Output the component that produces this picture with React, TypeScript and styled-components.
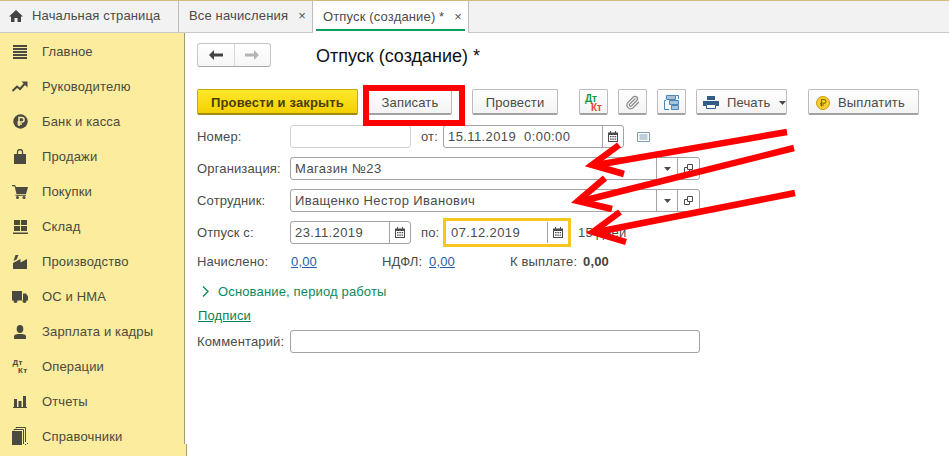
import { ReactNode } from 'react';
import styled, { createGlobalStyle } from 'styled-components';
import { Paperclip } from 'lucide-react';

const Global = createGlobalStyle`
    html, body { margin: 0; padding: 0; height: 100%; background: #fff; overflow: hidden; }
    body { font-family: "Liberation Sans", Arial, sans-serif; font-size: 13px; color: #4b4b4b; letter-spacing: 0.15px; }
    #root { height: 100%; }
`;

const Page = styled.div`
    position: relative;
    width: 949px;
    height: 456px;
    display: flex;
    flex-direction: column;
    overflow: hidden;
`;

const TabBar = styled.div`
    display: flex;
    height: 33px;
    flex: none;
    background: #f2f2f2;
    border-top: 1px solid #cdbd7d;
    border-bottom: 1px solid #c9c9c9;
    box-sizing: border-box;
`;

const Tab = styled.div<{ $active?: boolean; $width: number }>`
    position: relative;
    width: ${p => p.$width}px;
    box-sizing: border-box;
    display: flex;
    align-items: center;
    padding: 0 0 2px 10px;
    border-right: 1px solid #bdbdbd;
    background: ${p => (p.$active ? '#fff' : 'transparent')};
    color: #4b4b4b;
    white-space: nowrap;
    ${p => p.$active && `
        margin-bottom: -1px;
        &::after {
            content: '';
            position: absolute;
            left: 3px;
            right: 3px;
            bottom: 2px;
            height: 2px;
            background: #0f9d58;
        }
    `}
`;

const HomeTab = styled(Tab)`
    padding-left: 9px;
    gap: 9px;
`;

const Close = styled.span`
    margin-left: auto;
    margin-right: 6px;
    font-size: 13px;
    color: #555;
`;

const Body = styled.div`
    flex: 1;
    display: flex;
    min-height: 0;
`;

const Sidebar = styled.nav`
    position: relative;
    width: 185px;
    flex: none;
    box-sizing: border-box;
    background: #fbec9e;
    border-right: 1px solid #a39b6e;
    padding-top: 1px;
    &::after {
        content: '';
        position: absolute;
        right: -3px;
        bottom: 0;
        width: 2px;
        height: 12px;
        background: #fbec9e;
        border-right: 1px solid #a39b6e;
    }
`;

const NavItem = styled.div`
    height: 35px;
    display: flex;
    align-items: center;
    padding-left: 12px;
    gap: 14px;
    color: #4a4a40;
`;

const NavIcon = styled.span`
    width: 16px;
    height: 16px;
    display: flex;
    align-items: center;
    justify-content: center;
    flex: none;
`;

const Main = styled.main`
    flex: 1;
    padding: 10px 0 0 12px;
    min-width: 0;
`;

const Header = styled.div`
    display: flex;
    align-items: center;
    height: 24px;
`;

const NavGroup = styled.div`
    display: flex;
    width: 74px;
    height: 24px;
    box-sizing: border-box;
    background: linear-gradient(#fff, #f6f6f6);
    border: 1px solid #c4c4c4;
    border-bottom-color: #a9a9a9;
    border-radius: 3px;
`;

const NavButton = styled.div<{ $divided?: boolean }>`
    flex: 1;
    display: flex;
    align-items: center;
    justify-content: center;
    ${p => p.$divided && 'border-right: 1px solid #d8d8d8;'}
`;

const Title = styled.h1`
    margin: 2px 0 0 45px;
    font-size: 18px;
    font-weight: 400;
    color: #111;
    letter-spacing: 0;
`;

const Toolbar = styled.div`
    display: flex;
    align-items: center;
    height: 26px;
    margin-top: 22px;
`;

const Button = styled.div<{ $width: number; $left: number; $primary?: boolean; $start?: number }>`
    position: relative;
    width: ${p => p.$width}px;
    margin-left: ${p => p.$left}px;
    height: 26px;
    box-sizing: border-box;
    flex: none;
    display: flex;
    align-items: center;
    justify-content: ${p => (p.$start ? 'flex-start' : 'center')};
    padding: 2px 0 0 ${p => p.$start ?? 0}px;
    gap: 8px;
    border-radius: 2px;
    white-space: nowrap;
    border: 1px solid ${p => (p.$primary ? '#c9a900' : '#bcbcbc')};
    border-bottom: 2px solid ${p => (p.$primary ? '#a08a10' : '#a2a2a2')};
    background: ${p => (p.$primary ? 'linear-gradient(#ffe92b, #f3cf00)' : 'linear-gradient(#fff, #f3f3f3)')};
    font-weight: ${p => (p.$primary ? 700 : 400)};
    color: ${p => (p.$primary ? '#4a3f10' : '#4b4b4b')};
`;

const RedFrame = styled.div`
    position: absolute;
    left: -6px;
    top: -5px;
    width: 102px;
    height: 41px;
    box-sizing: border-box;
    border: 6px solid #f00;
    pointer-events: none;
`;

const DebitCredit = styled.span<{ $large?: boolean }>`
    position: relative;
    display: block;
    width: ${p => (p.$large ? 17 : 15)}px;
    height: ${p => (p.$large ? 18 : 16)}px;
    font-size: ${p => (p.$large ? 10 : 8)}px;
    line-height: ${p => (p.$large ? 9 : 8)}px;
    font-weight: 700;
    letter-spacing: ${p => (p.$large ? 0 : 0.4)}px;
`;

const Debit = styled.span<{ $large?: boolean }>`
    position: absolute;
    left: 0;
    top: 0;
    color: ${p => (p.$large ? '#0a9a48' : '#4a4a40')};
`;

const Credit = styled.span<{ $large?: boolean }>`
    position: absolute;
    right: 0;
    bottom: 0;
    color: ${p => (p.$large ? '#e8453c' : '#4a4a40')};
`;

const Row = styled.div<{ $top: number }>`
    display: flex;
    align-items: center;
    height: 23px;
    margin-top: ${p => p.$top}px;
`;

const Label = styled.span<{ $width?: number; $inset?: number }>`
    width: ${p => p.$width ?? 93}px;
    padding-left: ${p => p.$inset ?? 0}px;
    box-sizing: border-box;
    flex: none;
    white-space: nowrap;
`;

const Field = styled.div<{ $width: number; $focused?: boolean; $muted?: boolean }>`
    width: ${p => p.$width}px;
    height: 23px;
    box-sizing: border-box;
    flex: none;
    display: flex;
    align-items: stretch;
    background: #fff;
    border: 1px solid ${p => (p.$muted ? '#d2d2d2' : '#a3a3a3')};
    border-radius: 3px;
    ${p => p.$focused && `
        height: 29px;
        border: 3px solid #f9c51f;
        border-radius: 0;
        padding: 1px 0;
    `}
`;

const FieldText = styled.span<{ $indent?: number }>`
    flex: 1;
    align-self: center;
    padding-left: ${p => p.$indent ?? 4}px;
    white-space: pre;
    letter-spacing: 0.4px;
    color: #4b4b4b;
`;

const FieldButton = styled.span<{ $width?: number }>`
    width: ${p => p.$width ?? 20}px;
    flex: none;
    display: flex;
    align-items: center;
    justify-content: center;
    border-left: 1px solid #a3a3a3;
`;

const DocIcon = styled.span`
    margin-left: 13px;
    display: flex;
`;

const DaysText = styled.span`
    margin-left: 7px;
    white-space: nowrap;
`;

const Amount = styled.a`
    color: #1f5fa8;
    text-decoration: underline;
`;

const Total = styled.b`
    color: #444;
`;

const Spot = styled.span<{ $width: number }>`
    width: ${p => p.$width}px;
    flex: none;
    white-space: nowrap;
`;

const Expander = styled.div`
    display: flex;
    align-items: center;
    gap: 9px;
    height: 20px;
    margin-top: 8px;
    padding-left: 5px;
    color: #0a8a5c;
`;

const SignLink = styled.a`
    display: block;
    margin: 7px 0 0 1px;
    line-height: 15px;
    color: #0a7f52;
    text-decoration: underline;
`;

const Arrows = styled.svg`
    position: absolute;
    left: 0;
    top: 0;
    pointer-events: none;
`;

const dark = '#4a4a40';

const icons: Record<string, ReactNode> = {
    menu: (
        <svg width="14" height="14" viewBox="0 0 14 14" fill={dark}>
            <rect y="0" width="14" height="2" /><rect y="3" width="14" height="2" /><rect y="6" width="14" height="2" />
            <rect y="9" width="14" height="2" /><rect y="12" width="14" height="2" />
        </svg>
    ),
    trend: (
        <svg width="16" height="11" viewBox="0 0 16 11" fill="none" stroke={dark} strokeWidth="2">
            <path d="M0.500 10L5 5.500l3 2.500 5-5.500" /><path d="M9.500 0.500h6v6z" fill={dark} stroke="none" />
        </svg>
    ),
    rub: (
        <svg width="15" height="15" viewBox="0 0 15 15">
            <circle cx="7.500" cy="7.500" r="7.200" fill={dark} />
            <path d="M6 12V3.500h2.800a2.300 2.300 0 0 1 0 4.600H4.500M4.500 10h4.500" fill="none" stroke="#fbec9e" strokeWidth="1.500" />
        </svg>
    ),
    bag: (
        <svg width="12" height="15" viewBox="0 0 12 15" fill={dark}>
            <path d="M0 5h12v10H0z" />
            <path d="M3.500 6.500V3a2.500 2.500 0 0 1 5 0v3.500" fill="none" stroke={dark} strokeWidth="1.300" />
        </svg>
    ),
    cart: (
        <svg width="16" height="14" viewBox="0 0 16 14" fill={dark}>
            <path d="M0 0h3l1 2h12l-2 7H4.500L2.600 1.200H0z" />
            <rect x="3.500" y="9.800" width="10.500" height="1" /><circle cx="5.500" cy="12.500" r="1.500" /><circle cx="12" cy="12.500" r="1.500" />
        </svg>
    ),
    stock: (
        <svg width="15" height="14" viewBox="0 0 15 14" fill={dark}>
            <rect x="1" width="6" height="5" /><rect x="8" width="6" height="5" /><rect x="1" y="6" width="6" height="5" />
            <rect x="8" y="6" width="6" height="5" /><rect y="12.500" width="15" height="1.500" />
        </svg>
    ),
    factory: (
        <svg width="14" height="14" viewBox="0 0 14 14" fill={dark}>
            <path d="M0.500 6L2.500 0h3L3.500 4.500z" />
            <path d="M0 14V8l7.500-4v3.500L14 4v10z" />
        </svg>
    ),
    truck: (
        <svg width="16" height="12" viewBox="0 0 16 12" fill={dark}>
            <path d="M0 0h10v9.500H0zM11 2.500h3l2 3v4h-5z" />
            <circle cx="3.500" cy="10" r="2" /><circle cx="12.500" cy="10" r="2" />
        </svg>
    ),
    person: (
        <svg width="12" height="14" viewBox="0 0 12 14" fill={dark}>
            <ellipse cx="6" cy="4" rx="3.300" ry="4" /><path d="M0 14v-2.500C0 9.500 3 9 6 9s6 .500 6 2.500V14z" />
        </svg>
    ),
    dk: <DebitCredit><Debit>Дт</Debit><Credit>Кт</Credit></DebitCredit>,
    bars: (
        <svg width="14" height="12" viewBox="0 0 14 12" fill={dark}>
            <rect x="1" y="3" width="3" height="8" /><rect x="5.500" y="5" width="3" height="6" />
            <rect x="10" y="0" width="3" height="11" /><rect y="11" width="14" height="1" />
        </svg>
    ),
    books: (
        <svg width="16" height="20" viewBox="0 0 16 20" fill={dark}>
            <rect x="0" y="4" width="10" height="14" />
            <path d="M2 3.500V2.500h9.500V17M4 1.500V0.500h9.500V15" fill="none" stroke={dark} />
            <rect x="13" y="17" width="1" height="1" /><rect x="15" y="16" width="1" height="1" />
        </svg>
    ),
};

const menu: [string, string][] = [
    ['menu', 'Главное'], ['trend', 'Руководителю'], ['rub', 'Банк и касса'], ['bag', 'Продажи'],
    ['cart', 'Покупки'], ['stock', 'Склад'], ['factory', 'Производство'], ['truck', 'ОС и НМА'],
    ['person', 'Зарплата и кадры'], ['dk', 'Операции'], ['bars', 'Отчеты'], ['books', 'Справочники'],
];

function Calendar() {
    return (
        <svg width="10" height="11" viewBox="0 0 10 11" fill="#4a4a4a">
            <path d="M0 1.500h2V0h1v1.500h4V0h1v1.500h2V11H0zM1 4v6h8V4z" />
            <path d="M2 5h1.500v1.200H2zM4.300 5h1.500v1.200H4.300zM6.600 5h1.500v1.200H6.600zM2 7.500h1.500v1.200H2zM4.300 7.500h1.500v1.200H4.300zM6.600 7.500h1.500v1.200H6.600z" />
        </svg>
    );
}

function Caret() {
    return (
        <svg width="7" height="4" viewBox="0 0 7 4" fill="#4a4a4a"><path d="M0 0h7L3.500 4z" /></svg>
    );
}

function OpenIcon() {
    return (
        <svg width="9" height="9" viewBox="0 0 9 9" fill="none" stroke="#4a4a4a">
            <path d="M3.500 0.500h5v5h-5z" /><path d="M3 3.500H0.500v5h5V6" />
        </svg>
    );
}

function Picker(props: { value?: string; indent?: number }) {
    return (
        <>
            <FieldText $indent={props.indent}>{props.value}</FieldText>
            <FieldButton><Calendar /></FieldButton>
        </>
    );
}

function Select(props: { value: string }) {
    return (
        <Field $width={410}>
            <FieldText>{props.value}</FieldText>
            <FieldButton><Caret /></FieldButton>
            <FieldButton $width={21}><OpenIcon /></FieldButton>
        </Field>
    );
}

export default function App() {
    return (
        <Page>
            <Global />
            <TabBar>
                <HomeTab $width={179}>
                    <svg width="14" height="12" viewBox="0 0 14 12" fill="#444">
                        <path d="M7 0l7 6.500h-2V12H8.500V8h-3v4H2V6.500H0z" />
                    </svg>
                    Начальная страница
                </HomeTab>
                <Tab $width={134}>Все начисления<Close>×</Close></Tab>
                <Tab $width={156} $active>Отпуск (создание) *<Close>×</Close></Tab>
            </TabBar>
            <Body>
                <Sidebar>
                    {menu.map(([icon, text]) => (
                        <NavItem key={text}><NavIcon>{icons[icon]}</NavIcon>{text}</NavItem>
                    ))}
                </Sidebar>
                <Main>
                    <Header>
                        <NavGroup>
                            <NavButton $divided>
                                <svg width="14" height="10" viewBox="0 0 14 10" fill="#444">
                                    <path d="M0 5l5-5v3.500h9v3H5V10z" />
                                </svg>
                            </NavButton>
                            <NavButton>
                                <svg width="14" height="10" viewBox="0 0 14 10" fill="#b5b5b5">
                                    <path d="M14 5L9 0v3.500H0v3h9V10z" />
                                </svg>
                            </NavButton>
                        </NavGroup>
                        <Title>Отпуск (создание) *</Title>
                    </Header>
                    <Toolbar>
                        <Button $width={161} $left={0} $primary>Провести и закрыть</Button>
                        <Button $width={84} $left={10}>Записать<RedFrame /></Button>
                        <Button $width={86} $left={20}>Провести</Button>
                        <Button $width={29} $left={21}>
                            <DebitCredit $large><Debit $large>Дт</Debit><Credit $large>Кт</Credit></DebitCredit>
                        </Button>
                        <Button $width={29} $left={10}>
                            <Paperclip size={15} color="#8a8a8a" strokeWidth={2} />
                        </Button>
                        <Button $width={29} $left={10}>
                            <svg width="15" height="15" viewBox="0 0 15 15" fill="#a3c4e0" stroke="#4d86b5">
                                <path d="M2.500 0.500h9v4h-9zM5.500 5.500h9v4h-9zM7.500 10.500h7v4h-7z" />
                                <path d="M2 5.500H0.500v9H5M12 0.500h2.500V4" fill="none" />
                            </svg>
                        </Button>
                        <Button $width={91} $left={10} $start={6}>
                            <svg width="16" height="13" viewBox="0 0 16 13" fill="#2f5d85">
                                <path d="M4 0h8v4H4zM0 5h16v5h-3V8H3v2H0z" />
                                <path d="M3.500 8.500h9v4h-9z" fill="#fff" stroke="#2f5d85" />
                            </svg>
                            Печать
                            <Caret />
                        </Button>
                        <Button $width={111} $left={21} $start={7}>
                            <svg width="14" height="14" viewBox="0 0 14 14">
                                <circle cx="7" cy="7" r="6.500" fill="#f6cf2a" stroke="#c99a10" />
                                <path d="M5.500 10.500V3.500h2.500a1.800 1.800 0 0 1 0 3.800H4M4 9h4" fill="none" stroke="#8a6a08" strokeWidth="1.100" />
                            </svg>
                            Выплатить
                        </Button>
                    </Toolbar>
                    <Row $top={10}>
                        <Label>Номер:</Label>
                        <Field $width={121} $muted />
                        <Label $width={32} $inset={10}>от:</Label>
                        <Field $width={181}><Picker value="15.11.2019  0:00:00" /></Field>
                        <DocIcon>
                            <svg width="13" height="10" viewBox="0 0 13 10" fill="none" stroke="#7f9bb0">
                                <path d="M0.500 0.500h12v9h-12zM2.500 3h8M2.500 5h8M2.500 7h8" />
                            </svg>
                        </DocIcon>
                    </Row>
                    <Row $top={9}>
                        <Label>Организация:</Label>
                        <Select value="Магазин №23" />
                    </Row>
                    <Row $top={9}>
                        <Label>Сотрудник:</Label>
                        <Select value="Иващенко Нестор Иванович" />
                    </Row>
                    <Row $top={9}>
                        <Label>Отпуск с:</Label>
                        <Field $width={121}><Picker value="23.11.2019" /></Field>
                        <Label $width={32} $inset={10}>по:</Label>
                        <Field $width={128} $focused><Picker value="07.12.2019" indent={5} /></Field>
                        <DaysText>15 дней</DaysText>
                    </Row>
                    <Row $top={6}>
                        <Spot $width={94}>Начислено:</Spot>
                        <Spot $width={91}><Amount>0,00</Amount></Spot>
                        <Spot $width={47}>НДФЛ:</Spot>
                        <Spot $width={81}><Amount>0,00</Amount></Spot>
                        <Spot $width={73}>К выплате:</Spot>
                        <Total>0,00</Total>
                    </Row>
                    <Expander>
                        <svg width="7" height="11" viewBox="0 0 7 11" fill="none" stroke="#0a8a5c" strokeWidth="1.400">
                            <path d="M1 0.500l5 5-5 5" />
                        </svg>
                        Основание, период работы
                    </Expander>
                    <SignLink>Подписи</SignLink>
                    <Row $top={7}>
                        <Label>Комментарий:</Label>
                        <Field $width={410} />
                    </Row>
                </Main>
            </Body>
            <Arrows width="949" height="456" viewBox="0 0 949 456" fill="none" stroke="#f00" strokeWidth="6.500">
                <path d="M787 132L596 165" />
                <path d="M619 145L592 165L624 174" />
                <path d="M794 148L582 201" />
                <path d="M605 178L578 201L612 209" />
                <path d="M795 193L597 232" />
                <path d="M620 212L593 232L626 242" />
            </Arrows>
        </Page>
    );
}
